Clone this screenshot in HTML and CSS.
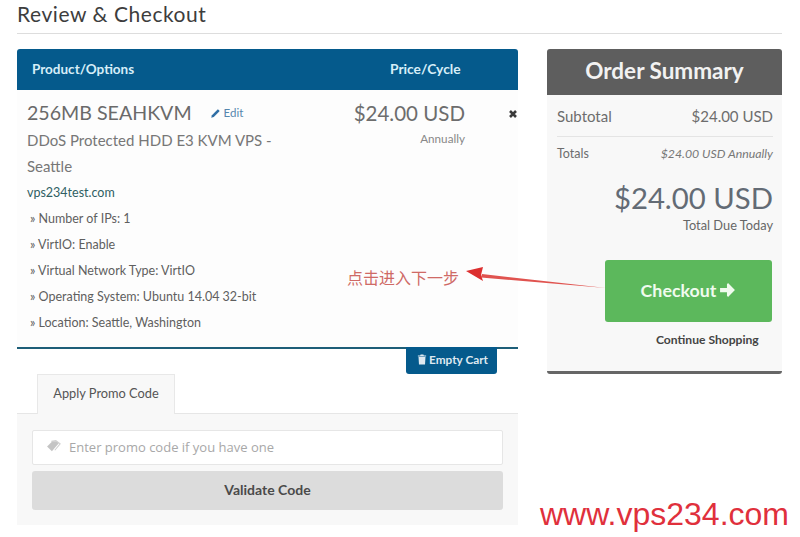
FILE: index.html
```html
<!DOCTYPE html>
<html lang="en">
<head>
<meta charset="utf-8">
<title>Review &amp; Checkout</title>
<link rel="stylesheet" href="styles.css">
</head>
<body>
<div class="page">
  <h1 class="title">Review &amp; Checkout</h1>
  <div class="columns">
    <main class="left">
      <div class="thead"><span>Product/Options</span><span class="thead-price">Price/Cycle</span></div>
      <div class="item">
        <div class="item-main">
          <div class="item-name"><span>256MB SEAHKVM</span>
            <a class="edit"><svg class="ico-pencil" viewBox="0 0 12 12"><path d="M8.600 1.400l2 2-6.500 6.500-2.800.8.8-2.800z" fill="#2f6ea5"/></svg>Edit</a></div>
          <div class="item-desc">DDoS Protected HDD E3 KVM VPS - Seattle</div>
          <div class="item-domain">vps234test.com</div>
          <ul class="opts">
            <li>» Number of IPs: 1</li>
            <li>» VirtIO: Enable</li>
            <li>» Virtual Network Type: VirtIO</li>
            <li>» Operating System: Ubuntu 14.04 32-bit</li>
            <li>» Location: Seattle, Washington</li>
          </ul>
        </div>
        <div class="item-price">
          <div class="price">$24.00 USD</div>
          <div class="cycle">Annually</div>
        </div>
        <div class="item-x"><svg viewBox="0 0 10 10" class="ico-x"><path d="M2 2l6 6M8 2l-6 6" stroke="#3a3a3a" stroke-width="2.600" fill="none"/></svg></div>
      </div>
      <div class="empty-row"><a class="empty"><svg class="ico-trash" viewBox="0 0 10 12"><path d="M3.500 0.500h3l.5 1h2.500v1.200H.5V1.500H3zM1.200 3.300h7.600l-.5 8.200H1.700z" fill="#dfe9f1"/></svg>Empty Cart</a></div>
      <div class="tabs"><div class="tab">Apply Promo Code</div></div>
      <div class="promo">
        <div class="field"><svg class="ico-tag" viewBox="0 0 14 12"><path d="M1 6l5-5h4l2 2-6.500 7.500z" fill="#c4c4c4"/><path d="M5 1.200L9.200 0.500l4 3-5 6" fill="none" stroke="#cfcfcf"/></svg><span>Enter promo code if you have one</span></div>
        <div class="validate">Validate Code</div>
      </div>
    </main>
    <aside class="right">
      <div class="sum-head">Order Summary</div>
      <div class="sum-body">
        <div class="sum-row"><span>Subtotal</span><span>$24.00 USD</span></div>
        <div class="sum-totals"><span>Totals</span><em>$24.00 USD Annually</em></div>
        <div class="sum-total">$24.00 USD</div>
        <div class="sum-due">Total Due Today</div>
        <a class="checkout">Checkout<svg class="ico-arrow" viewBox="0 0 16 14"><path d="M1 5h6.500V1.500L8.500.5l6.500 6.500-6.500 6.500-1-1V9H1z" fill="#f0fbee"/></svg></a>
        <a class="continue">Continue Shopping</a>
      </div>
    </aside>
  </div>
  <div class="note">点击进入下一步</div>
  <svg class="arrow" viewBox="0 0 150 30"><path d="M146 26L22 12 21 15.500z" fill="#e0534f"/><path d="M6 9l17-4-2 8 2 6z" fill="#dc2f2f"/></svg>
  <div class="mark">www.vps234.com</div>
</div>
</body>
</html>
```
FILE: styles.css
```css
* { box-sizing: border-box; }
html, body { margin: 0; background: #fff; }
body { font-family: Lato, "Noto Sans", sans-serif; color: #666; }
.page { position: relative; width: 800px; height: 537px; padding: 0 18px 0 17px; overflow: hidden; }
.title { margin: 0; height: 34px; border-bottom: 1px solid #ddd; font-size: 21px; line-height: 27px; font-weight: 400; color: #3d3d3d; letter-spacing: .55px; }
.columns { display: flex; gap: 29px; margin-top: 15px; align-items: flex-start; }
.left { width: 501px; flex: none; }
.right { width: 235px; flex: none; }
.thead { height: 41px; display: flex; align-items: center; padding: 0 0 2px 15px; background: #055a8c; border-radius: 3px 3px 0 0; color: #d7eef8; font-size: 13.500px; font-weight: 700; }
.thead span:first-child { width: 358px; }
.thead-price { font-size: 13.800px; }
.item { display: flex; height: 259px; padding: 10px 0 0 10px; border-bottom: 2px solid #1d5e78; background: #fdfdfd; }
.item-main { width: 301px; flex: none; }
.item-name { display: flex; align-items: center; font-size: 19.600px; line-height: 26px; color: #6a6a6a; }
.edit { display: inline-flex; align-items: center; margin-left: 18px; font-size: 11.500px; color: #5586ad; }
.ico-pencil { width: 11px; height: 11px; margin-right: 3px; }
.item-desc { width: 260px; margin-top: 1px; font-size: 15px; line-height: 26px; color: #777; }
.item-domain { margin-top: 1px; font-size: 12.500px; line-height: 26px; color: #2f5f63; }
.opts { list-style: none; margin: 0; padding: 0 0 0 3px; font-size: 12.500px; line-height: 26px; color: #5f5f5f; }
.item-price { width: 137px; flex: none; text-align: right; }
.price { font-size: 20.500px; line-height: 26px; color: #6d6d6d; }
.cycle { margin-top: 4px; font-size: 11.700px; line-height: 16px; color: #888; }
.item-x { flex: 1; padding: 9px 0 0 43px; }
.ico-x { display: block; width: 10px; height: 10px; }
.empty-row { display: flex; justify-content: flex-end; margin-top: -2px; padding-right: 21px; position: relative; }
.empty { display: flex; align-items: center; height: 27px; padding: 0 9px 2px 11px; border-radius: 0 0 3px 3px; background: #055a8c; color: #dfe9f1; font-size: 11.800px; font-weight: 700; }
.ico-trash { width: 10px; height: 11px; margin-right: 2px; }
.tabs { height: 40px; padding-left: 20px; border-bottom: 1px solid #e6e6e6; }
.tab { width: 138px; height: 40px; display: flex; align-items: center; justify-content: center; padding-bottom: 3px; border: 1px solid #e8e8e8; border-bottom: 0; background: #f8f8f8; font-size: 12.800px; color: #555; }
.promo { height: 111px; padding: 16px 15px 0; background: #f8f8f8; }
.field { display: flex; align-items: center; height: 35px; padding: 0 0 2px 13px; border: 1px solid #e6e6e6; background: #fff; border-radius: 2px; font-family: "Open Sans", sans-serif; font-size: 13px; color: #a8a8a8; }
.ico-tag { width: 15px; height: 13px; margin-right: 8px; }
.validate { display: flex; align-items: center; justify-content: center; height: 39px; margin-top: 6px; padding-bottom: 3px; border-radius: 3px; background: #dcdcdc; color: #4a4a4a; font-size: 14px; font-weight: 700; }
.sum-head { height: 46px; display: flex; align-items: center; justify-content: center; padding-bottom: 4px; background: #5e5e5e; border-radius: 3px 3px 0 0; color: #f2f2f2; font-size: 22.500px; font-weight: 700; }
.sum-body { height: 279px; padding: 0 9px 0 10px; background: #f8f8f8; border-bottom: 3px solid #666; border-radius: 0 0 3px 3px; }
.sum-row { display: flex; justify-content: space-between; align-items: center; height: 42px; border-bottom: 1px solid #e4e4e4; font-size: 15px; color: #6d6d6d; }
.sum-totals { display: flex; justify-content: space-between; align-items: center; height: 33px; font-size: 12.500px; color: #6d6d6d; }
.sum-totals em { font-size: 12.300px; color: #777; }
.sum-total { margin-top: 10px; text-align: right; font-size: 29.300px; line-height: 36px; color: #636b75; }
.sum-due { text-align: right; font-size: 12.800px; line-height: 18px; color: #666; }
.checkout { display: flex; align-items: center; justify-content: center; width: 167px; height: 62px; margin: 26px 0 0 48px; padding-bottom: 3px; border-radius: 3px; background: #5cb85c; color: #f0fbee; font-size: 17.800px; font-weight: 700; }
.ico-arrow { width: 17px; height: 16px; margin-left: 3px; }
.continue { display: block; margin-top: 10px; padding-left: 99px; font-size: 12.100px; line-height: 16px; font-weight: 700; color: #444; white-space: nowrap; }
.note { position: absolute; left: 347px; top: 267px; font-family: "Noto Sans CJK SC", sans-serif; font-size: 16px; line-height: 20px; color: #cf6a66; }
.arrow { position: absolute; left: 460px; top: 262px; width: 150px; height: 30px; }
.mark { position: absolute; left: 540px; top: 497px; font-family: "Liberation Sans", sans-serif; font-size: 32px; line-height: 34px; color: #e0303c; }
```
